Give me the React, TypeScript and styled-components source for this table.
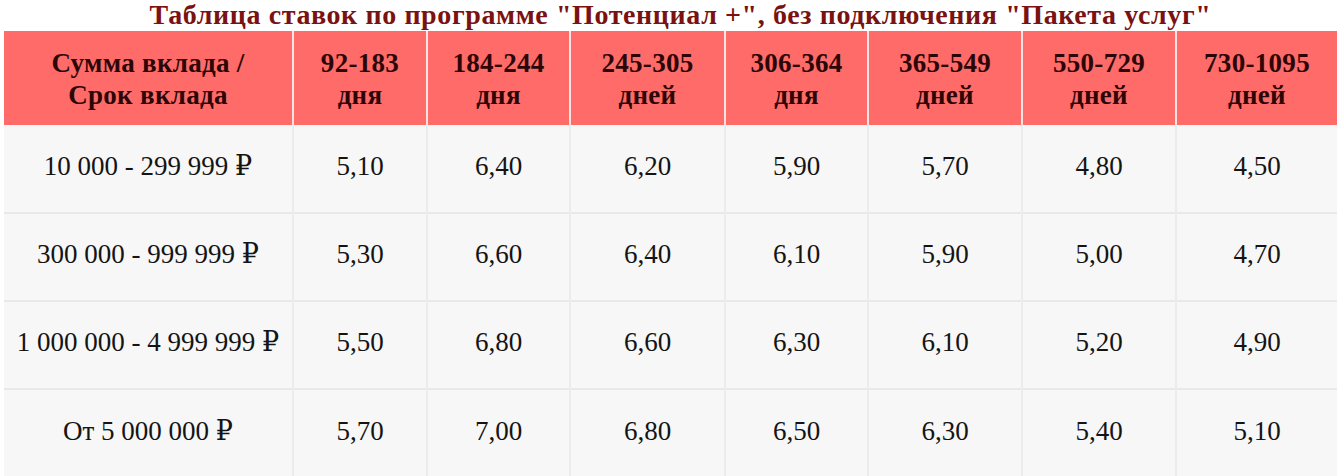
import React from "react";
import styled, { createGlobalStyle } from "styled-components";

const GlobalStyle = createGlobalStyle`
  html, body {
    margin: 0;
    padding: 0;
    background: #ffffff;
  }
  body {
    font-family: "Liberation Serif", "Times New Roman", "DejaVu Serif", serif;
  }
`;

const Page = styled.div`
  width: 1337px;
  height: 476px;
  overflow: hidden;
  background: #ffffff;
  font-family: "Liberation Serif", "Times New Roman", "DejaVu Serif", serif;
`;

const Title = styled.h1`
  margin: 0;
  height: 31px;
  line-height: 29px;
  text-align: center;
  font-family: inherit;
  font-size: 28px;
  letter-spacing: 0.6px;
  font-weight: bold;
  color: #7a1212;
  padding-left: 24px;
  white-space: nowrap;
`;

const Table = styled.table`
  margin-left: 4px;
  width: 1333px;
  border-collapse: collapse;
  table-layout: fixed;
  font-family: inherit;
`;

const HeadCell = styled.th`
  height: 94px;
  padding: 2px 0 0 0;
  box-sizing: border-box;
  background: #fe6b68;
  color: #2c0606;
  font-family: inherit;
  font-size: 27px;
  letter-spacing: 0.3px;
  font-weight: bold;
  line-height: 32px;
  text-align: center;
  vertical-align: middle;
  border-left: 2px solid #fbe3e2;
  &:first-child {
    border-left: none;
  }
`;

const Row = styled.tr`
  & + & td {
    border-top: 2px solid #e9e9e9;
  }
`;

const Cell = styled.td`
  height: 88px;
  padding: 0 0 6px 0;
  box-sizing: border-box;
  background: #f7f7f7;
  color: #141414;
  font-family: inherit;
  font-size: 27px;
  line-height: 30px;
  text-align: center;
  vertical-align: middle;
  border-left: 2px solid #ececec;
  white-space: nowrap;
  &:first-child {
    border-left: none;
  }
`;

const widths = [289, 134, 143, 155, 143, 154, 154, 161];

const headers: [string, string][] = [
  ["Сумма вклада /", "Срок вклада"],
  ["92-183", "дня"],
  ["184-244", "дня"],
  ["245-305", "дней"],
  ["306-364", "дня"],
  ["365-549", "дней"],
  ["550-729", "дней"],
  ["730-1095", "дней"],
];

const rows: string[][] = [
  ["10 000 - 299 999 ₽", "5,10", "6,40", "6,20", "5,90", "5,70", "4,80", "4,50"],
  ["300 000 - 999 999 ₽", "5,30", "6,60", "6,40", "6,10", "5,90", "5,00", "4,70"],
  ["1 000 000 - 4 999 999 ₽", "5,50", "6,80", "6,60", "6,30", "6,10", "5,20", "4,90"],
  ["От 5 000 000 ₽", "5,70", "7,00", "6,80", "6,50", "6,30", "5,40", "5,10"],
];

export default function App() {
  return (
    <Page>
      <GlobalStyle />
      <Title>Таблица ставок по программе "Потенциал +", без подключения "Пакета услуг"</Title>
      <Table>
        <colgroup>
          {widths.map((w, i) => (
            <col key={i} style={{ width: w }} />
          ))}
        </colgroup>
        <thead>
          <tr>
            {headers.map(([a, b], i) => (
              <HeadCell key={i}>
                {a}
                <br />
                {b}
              </HeadCell>
            ))}
          </tr>
        </thead>
        <tbody>
          {rows.map((r, i) => (
            <Row key={i}>
              {r.map((v, j) => (
                <Cell key={j}>{v}</Cell>
              ))}
            </Row>
          ))}
        </tbody>
      </Table>
    </Page>
  );
}
